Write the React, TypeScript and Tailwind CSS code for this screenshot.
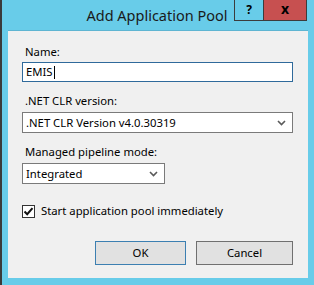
const font = { fontFamily: '"Noto Sans", "Open Sans", Arial, sans-serif' }

function Chevron () {
  return (
    <svg width="9" height="6" viewBox="0 0 9 6" className="shrink-0">
      <polyline points="1,1 4.5,4.5 8,1" fill="none" stroke="#5a5a5a" strokeWidth="1.6" />
    </svg>
  )
}

function Select ({ value, className }: { value: string, className: string }) {
  return (
    <div className={`flex items-center justify-between h-[21px] border border-[#7a7a7a] bg-white pl-[3px] pr-[6px] ${className}`}>
      <span className="leading-none">{value}</span>
      <Chevron />
    </div>
  )
}

export default function App () {
  return (
    <div className="w-[314px] h-[285px] bg-[#68cce9] border-l-2 border-[#3a3a3a] flex flex-col text-[11.3px] text-black" style={font}>
      <div className="grid grid-cols-[1fr_auto_1fr] h-[30px] shrink-0">
        <div />
        <div className="text-[14.5px] text-[#1a1a1a] pt-[5px] leading-[20px] -ml-[2px]">Add Application Pool</div>
        <div className="flex justify-end items-start pr-[7px]">
          <div className="w-[30px] h-[21px] border border-t-0 border-[#3c3c3c] flex items-center justify-center font-bold text-[12px]">?</div>
          <div className="w-[43px] h-[21px] bg-[#c75050] border-b border-r border-[#3c3c3c] flex items-center justify-center font-bold text-[14px] leading-none pb-[2px]">x</div>
        </div>
      </div>
      <div className="ml-[6px] w-[300px] h-[248px] bg-[#f0f0f0] border-t border-[#5eb5d2] pl-[14px] pr-[15px] pt-[13px] flex flex-col">
        <div className="leading-[16px] pl-[3px]">Name:</div>
        <div className="mt-[2px] h-[20px] border border-[#2f6a9b] bg-white flex items-center pl-[3px]">
          <span className="leading-none">EMIS</span>
          <span className="w-px h-[13px] bg-black ml-[1px]" />
        </div>
        <div className="mt-[11px] leading-[16px] pl-[3px]">.NET CLR version:</div>
        <Select value=".NET CLR Version v4.0.30319" className="mt-[3px] w-full" />
        <div className="mt-[11px] leading-[16px] pl-[3px]">Managed pipeline mode:</div>
        <Select value="Integrated" className="mt-[3px] w-[143px]" />
        <div className="mt-[19px] flex items-center gap-[6px]">
          <div className="w-[13px] h-[13px] border border-[#333] bg-white flex items-center justify-center">
            <svg width="11" height="11" viewBox="0 0 11 11">
              <polyline points="1.5,5.5 4.2,8.2 9.5,2.2" fill="none" stroke="#111" strokeWidth="2" />
            </svg>
          </div>
          <span className="leading-[16px]">Start application pool immediately</span>
        </div>
        <div className="mt-[22px] flex justify-end gap-[10px]">
          <button className="w-[91px] h-[24px] bg-[#e1e1e1] border border-[#3c7fb1]">OK</button>
          <button className="w-[97px] h-[24px] bg-[#e1e1e1] border border-[#707070]">Cancel</button>
        </div>
      </div>
    </div>
  )
}
